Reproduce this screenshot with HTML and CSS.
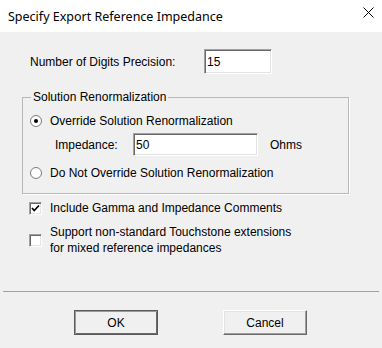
FILE: index.html
```html
<!DOCTYPE html>
<html lang="en">
<head>
  <meta charset="UTF-8">
  <title>Specify Export Reference Impedance</title>
  <link rel="stylesheet" href="styles.css">
</head>
<body>
  <div class="dialog">
    <div class="titlebar">
      <span class="title">Specify Export Reference Impedance</span>
      <svg class="close" width="11" height="11" viewBox="0 0 11 11">
        <path d="M0.5 0.5 L10.5 10.5 M10.5 0.5 L0.5 10.5" stroke="#000" stroke-width="1" fill="none"/>
      </svg>
    </div>

    <div class="precision-row">
      <span class="precision-label">Number of Digits Precision:</span>
      <span class="field field-short">15</span>
    </div>

    <fieldset class="group">
      <legend>Solution Renormalization</legend>
      <div class="option first">
        <span class="radio checked"></span>
        <span>Override Solution Renormalization</span>
      </div>
      <div class="impedance-row">
        <span class="impedance-label">Impedance:</span>
        <span class="field field-long">50</span>
        <span class="unit">Ohms</span>
      </div>
      <div class="option second">
        <span class="radio"></span>
        <span>Do Not Override Solution Renormalization</span>
      </div>
    </fieldset>

    <div class="check-row first">
      <span class="check">
        <svg width="9" height="9" viewBox="0 0 9 9">
          <polyline points="1,4 3.2,6.5 8,1.5" stroke="#000" stroke-width="1.7" fill="none"/>
        </svg>
      </span>
      <span>Include Gamma and Impedance Comments</span>
    </div>
    <div class="check-row second">
      <span class="check"></span>
      <span>Support non-standard Touchstone extensions<br>for mixed reference impedances</span>
    </div>

    <hr class="separator">

    <div class="buttons">
      <button class="btn default">OK</button>
      <button class="btn">Cancel</button>
    </div>
  </div>
</body>
</html>
```

FILE: styles.css
```css
body { margin: 0; background: #f0f0f0; color: #000; font-family: "Liberation Sans", Arial, sans-serif; font-size: 12px; }
.dialog { width: 382px; height: 348px; background: #f0f0f0; overflow: hidden; }

.titlebar { height: 32px; box-sizing: border-box; padding: 0 8px; background: #fff; display: flex; justify-content: space-between; align-items: center; }
.title { font-family: "Noto Sans", sans-serif; font-size: 12.5px; }
.close { align-self: flex-start; margin-top: 7px; }

.precision-row { display: flex; align-items: center; height: 25px; margin-top: 17px; padding-left: 30px; }
.precision-label { width: 174px; }

.field { box-sizing: border-box; height: 25px; padding-left: 2px; display: flex; align-items: center; background: #fff; border: 1px solid; border-color: #a0a0a0 #fff #fff #a0a0a0; box-shadow: inset 1px 1px #696969, inset -1px -1px #e3e3e3; }
.field-short { width: 68px; }
.field-long { width: 125px; height: 23px; }

.group { margin: 16px 33px 0 22px; padding: 0 0 12px 7px; border: 1px solid #b8b8b8; box-shadow: 1px 1px 0 #fff; }
.group legend { margin-left: 1px; padding: 0 2px; line-height: 14px; }

.option { display: flex; align-items: center; gap: 8px; height: 16px; }
.option.first { margin-top: 9px; }
.option.second { margin-top: 9px; }
.radio { width: 12px; height: 12px; box-sizing: border-box; border-radius: 50%; border: 1px solid #7a7a7a; background: #fff; display: flex; align-items: center; justify-content: center; }
.radio.checked::after { content: ""; width: 4px; height: 4px; border-radius: 50%; background: #000; }

.impedance-row { display: flex; align-items: center; height: 23px; margin-top: 4px; padding-left: 25px; }
.impedance-label { width: 78px; }
.unit { margin-left: 12px; }

.check-row { display: flex; align-items: center; gap: 8px; margin-left: 29px; line-height: 16px; }
.check-row.first { margin-top: 6px; }
.check-row.second { margin-top: 8px; }
.check { width: 13px; height: 13px; box-sizing: border-box; flex: none; background: #fff; border: 1px solid; border-color: #a0a0a0 #fff #fff #a0a0a0; box-shadow: inset 1px 1px #696969, inset -1px -1px #e3e3e3; display: flex; align-items: center; justify-content: center; }

.separator { margin: 35px 3px 0; height: 0; border: 0; border-top: 1px solid #a0a0a0; }

.buttons { display: flex; gap: 65px; margin-top: 18px; padding-left: 74px; }
.btn { width: 84px; height: 25px; padding: 0; font: inherit; color: #000; background: #f0f0f0; border: 1px solid; border-color: #fff #696969 #696969 #fff; box-shadow: inset -1px -1px #a0a0a0, inset 1px 1px #e3e3e3; }
.btn.default { border-color: #5a5a5a; box-shadow: inset 1px 1px #9a9a9a, inset -1px -1px #696969; }
```
